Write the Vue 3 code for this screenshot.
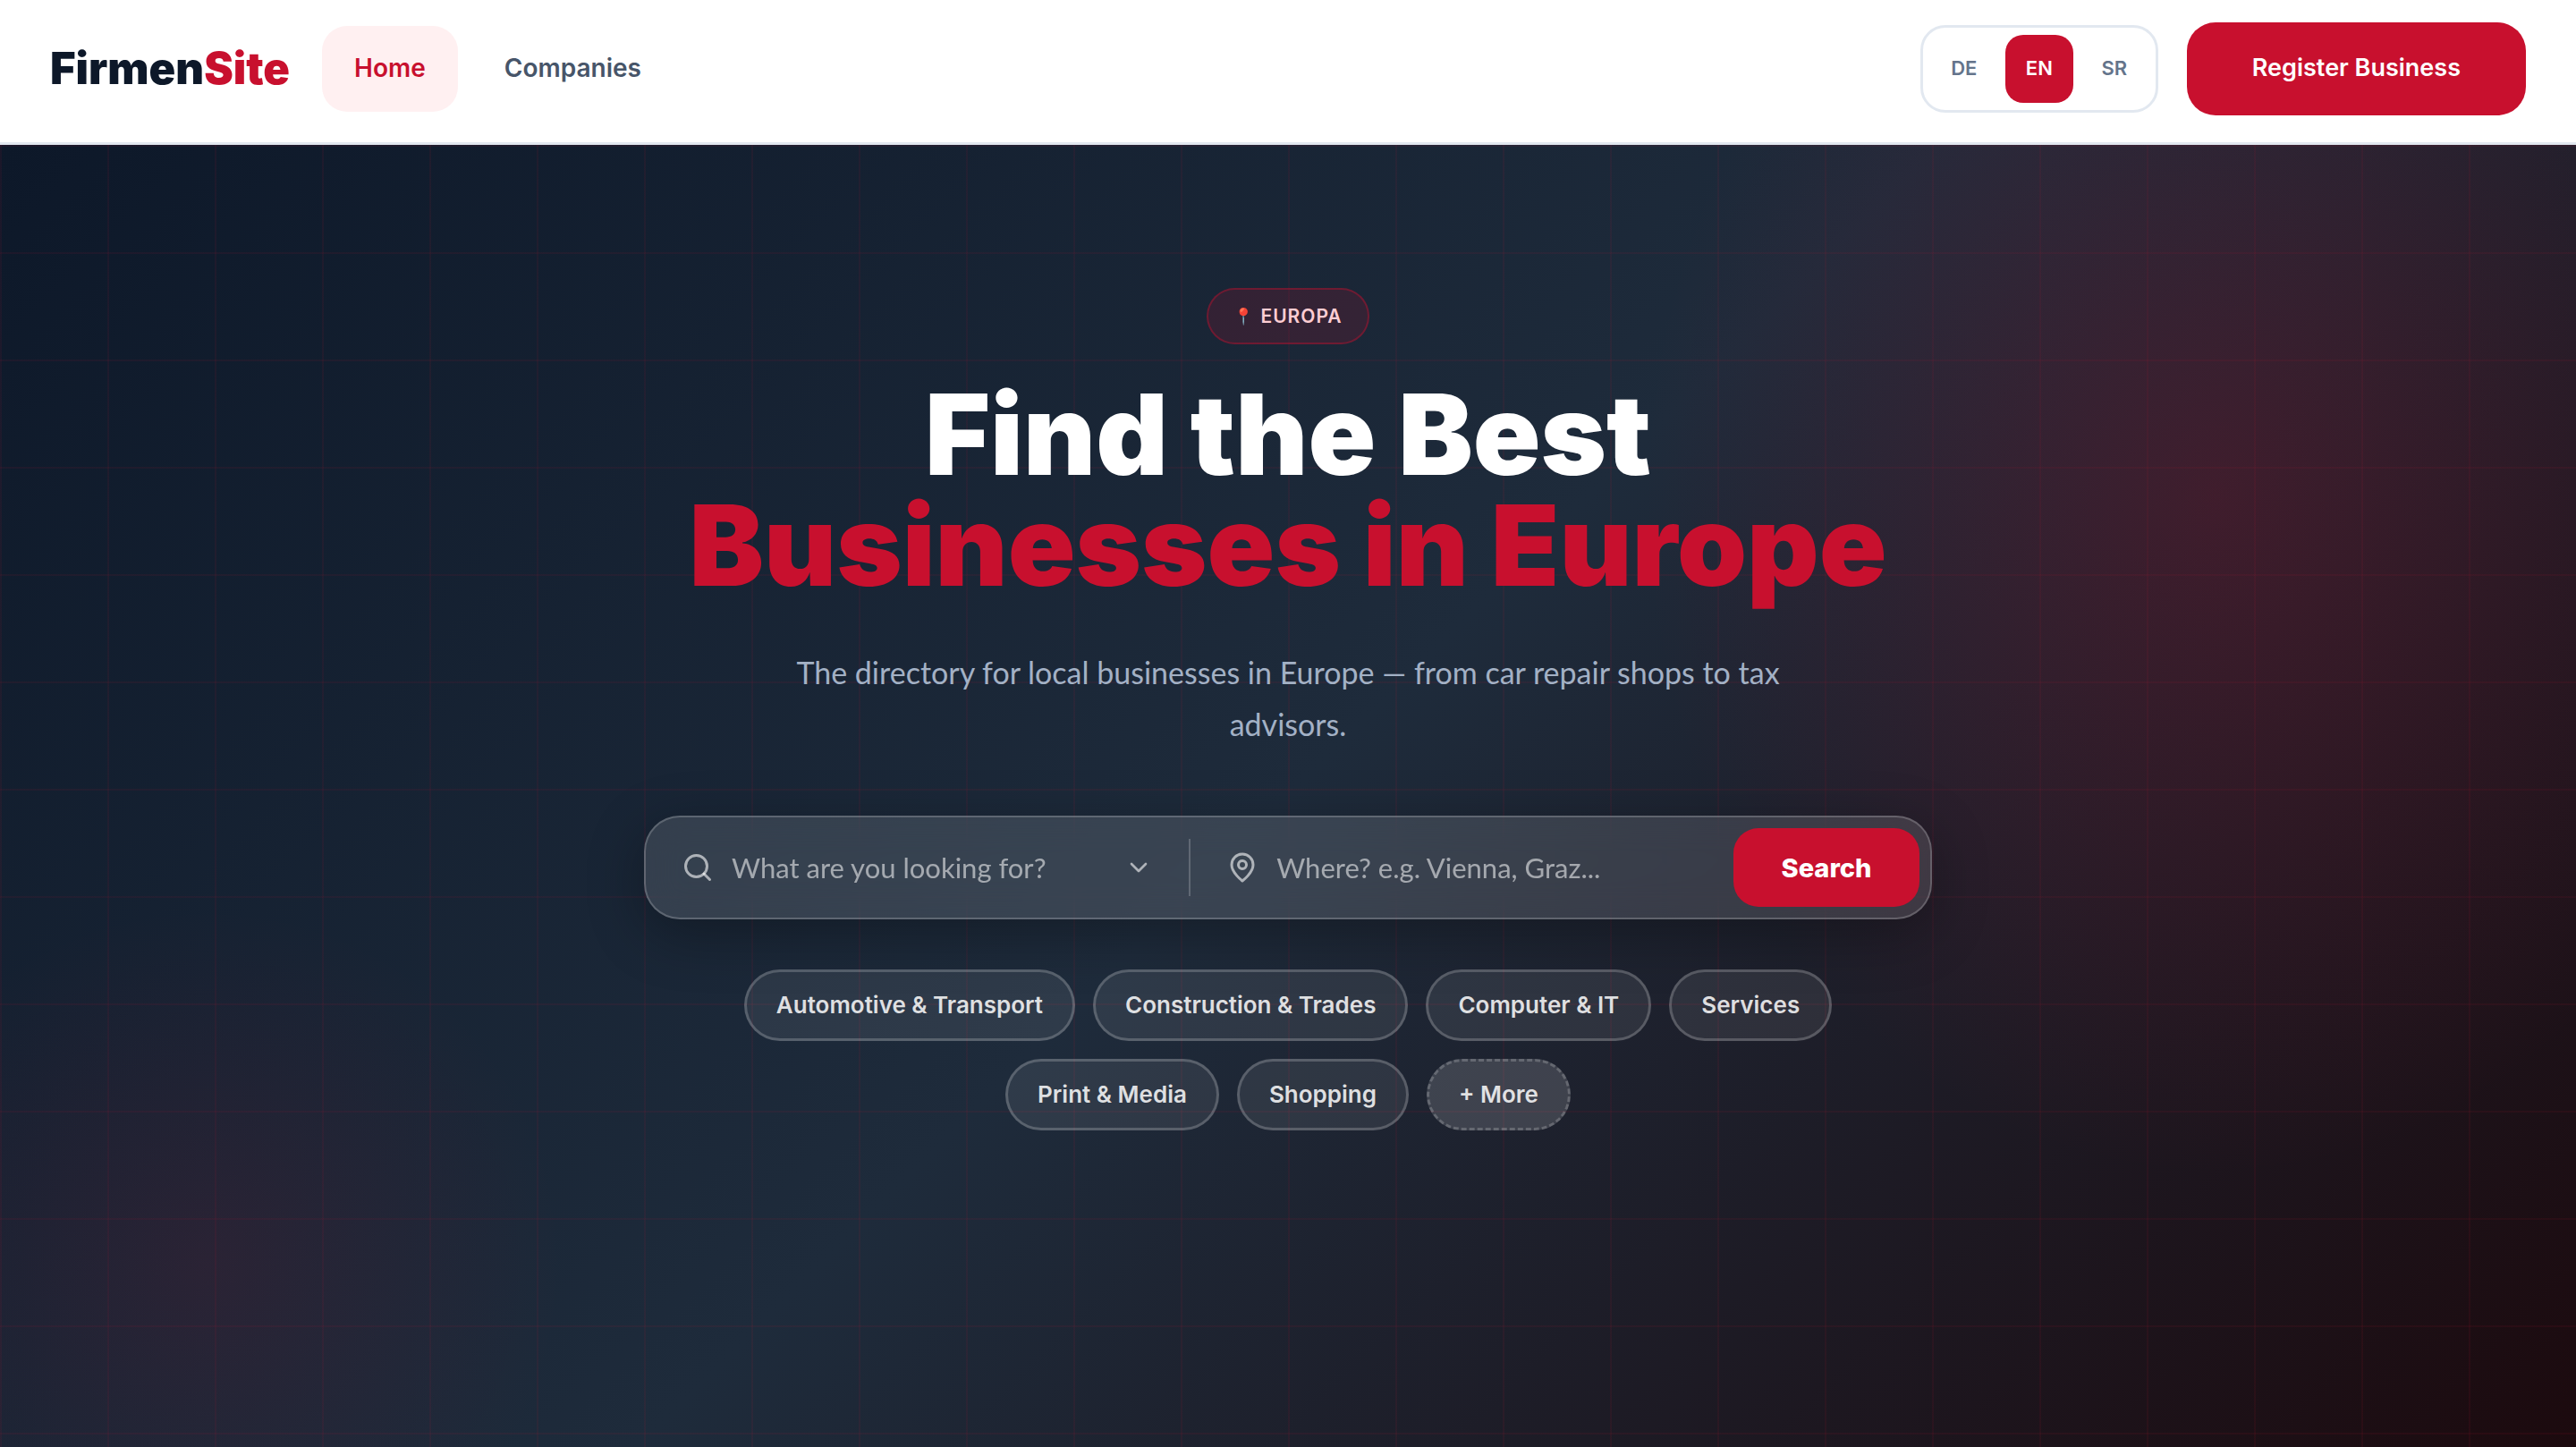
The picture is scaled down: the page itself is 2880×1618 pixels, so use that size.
<script setup>
import { ref } from 'vue'

const languages = ['DE', 'EN', 'SR']
const activeLanguage = ref('EN')

const categories = [
  'Automotive & Transport',
  'Construction & Trades',
  'Computer & IT',
  'Services',
  'Print & Media',
  'Shopping'
]
const category = ref('')
const place = ref('')
</script>

<template>
  <div class="page">
    <header class="topbar">
      <a class="logo" href="#">Firmen<span class="logo-accent">Site</span></a>
      <nav class="nav">
        <a class="nav-link active" href="#">Home</a>
        <a class="nav-link" href="#companies">Companies</a>
      </nav>
      <div class="languages">
        <button
          v-for="lang in languages"
          :key="lang"
          type="button"
          class="language"
          :class="{ active: lang === activeLanguage }"
          @click="activeLanguage = lang"
        >{{ lang }}</button>
      </div>
      <a class="register" href="#register">Register Business</a>
    </header>

    <main class="hero">
      <div class="badge"><span class="badge-icon">📍</span>EUROPA</div>
      <h1 class="title">
        Find the Best
        <span class="title-accent">Businesses in Europe</span>
      </h1>
      <p class="lead">
        The directory for local businesses in Europe — from car repair shops to tax advisors.
      </p>

      <form class="search" @submit.prevent>
        <div class="field field-what">
          <svg class="icon" viewBox="0 0 24 24" aria-hidden="true">
            <circle cx="11" cy="11" r="8" />
            <path d="m21 21-4.35-4.35" />
          </svg>
          <select v-model="category" class="control" aria-label="What are you looking for?">
            <option value="">What are you looking for?</option>
            <option v-for="name in categories" :key="name" :value="name">{{ name }}</option>
          </select>
          <svg class="icon chevron" viewBox="0 0 24 24" aria-hidden="true">
            <path d="m6 9 6 6 6-6" />
          </svg>
        </div>
        <span class="divider"></span>
        <div class="field field-where">
          <svg class="icon" viewBox="0 0 24 24" aria-hidden="true">
            <path d="M20 10c0 6-8 12-8 12s-8-6-8-12a8 8 0 0 1 16 0Z" />
            <circle cx="12" cy="10" r="3" />
          </svg>
          <input
            v-model="place"
            class="control"
            type="text"
            aria-label="Where?"
            placeholder="Where? e.g. Vienna, Graz..."
          />
        </div>
        <button class="submit" type="submit">Search</button>
      </form>

      <div class="chips">
        <a v-for="name in categories" :key="name" class="chip" href="#companies">{{ name }}</a>
        <button type="button" class="chip chip-more">+ More</button>
      </div>
    </main>
  </div>
</template>

<style>
body {
  margin: 0;
}
</style>

<style scoped>
.page {
  --red: #c8102e;
  display: flex;
  flex-direction: column;
  min-height: 100vh;
  font-family: Inter, "Liberation Sans", sans-serif;
}

.page *,
.page {
  box-sizing: border-box;
}

a {
  text-decoration: none;
}

button {
  border: 0;
  font-family: inherit;
  cursor: pointer;
}

/* Top bar */
.topbar {
  display: flex;
  align-items: center;
  padding: 25px 56px 30px;
  background: #fff;
  border-bottom: 3px solid #e2e8f0;
}

.logo {
  margin-right: 36px;
  font-size: 49px;
  font-weight: 900;
  line-height: 64px;
  color: #0d1829;
}

.logo-accent {
  color: var(--red);
}

.nav {
  display: flex;
  gap: 16px;
  margin-right: auto;
}

.nav-link {
  padding: 0 36px 2px;
  border-radius: 28px;
  font-size: 28px;
  font-weight: 600;
  line-height: 94px;
  color: #475569;
}

.nav-link.active {
  background: #fff0f1;
  color: var(--red);
}

.languages {
  display: flex;
  gap: 8px;
  margin-right: 32px;
  padding: 8px;
  border: 3px solid #e2e8f0;
  border-radius: 28px;
}

.language {
  width: 76px;
  height: 76px;
  padding: 0 0 2px;
  border-radius: 20px;
  background: transparent;
  font-size: 22px;
  font-weight: 600;
  color: #64748b;
}

.language.active {
  background: var(--red);
  color: #fff;
}

.register {
  padding: 0 73px 2px;
  border-radius: 32px;
  background: var(--red);
  font-size: 27px;
  font-weight: 600;
  line-height: 102px;
  color: #fff;
}

/* Hero */
.hero {
  display: flex;
  flex: 1;
  flex-direction: column;
  align-items: center;
  padding: 160px 56px;
  background:
    linear-gradient(rgba(200, 16, 46, 0.08) 2px, transparent 2px) 0 0 / 120px 120px,
    linear-gradient(90deg, rgba(200, 16, 46, 0.08) 2px, transparent 2px) 0 0 / 120px 120px,
    radial-gradient(ellipse 640px 760px at 86% 27%, rgba(200, 16, 46, 0.2), transparent),
    radial-gradient(circle 400px at 8% 86%, rgba(200, 16, 46, 0.1), transparent),
    linear-gradient(135deg, #0d1829 0%, #1e2b3b 50%, #1c0a0e 100%);
}

.badge {
  display: flex;
  align-items: center;
  gap: 8px;
  height: 63px;
  padding: 0 28px;
  border: 2px solid rgba(200, 16, 46, 0.4);
  border-radius: 32px;
  background: rgba(200, 16, 46, 0.15);
  font-size: 21px;
  font-weight: 600;
  letter-spacing: 1px;
  color: #fecdd3;
}

.badge-icon {
  font-size: 18px;
  letter-spacing: 0;
}

.title {
  margin: 39px 0 0;
  font-size: 125px;
  font-weight: 900;
  line-height: 124px;
  text-align: center;
  color: #fff;
}

.title-accent {
  display: block;
  color: var(--red);
}

.lead {
  max-width: 1160px;
  margin: 51px 0 0;
  font-family: Lato, sans-serif;
  font-size: 34px;
  line-height: 58px;
  text-align: center;
  color: #a3b1c5;
}

.search {
  display: flex;
  align-items: center;
  width: 100%;
  max-width: 1440px;
  margin-top: 73px;
  padding: 12px;
  border: 2px solid rgba(255, 255, 255, 0.2);
  border-radius: 40px;
  background: rgba(255, 255, 255, 0.12);
  box-shadow: 0 16px 64px rgba(0, 0, 0, 0.3);
  backdrop-filter: blur(20px);
}

.field {
  display: flex;
  align-items: center;
  gap: 20px;
  height: 88px;
}

.field-what {
  flex: 590;
  padding: 0 40px 0 28px;
}

.field-where {
  flex: 612;
  padding: 0 20px 0 40px;
}

.icon {
  flex: none;
  width: 36px;
  height: 36px;
  fill: none;
  stroke: rgba(255, 255, 255, 0.6);
  stroke-width: 2;
  stroke-linecap: round;
  stroke-linejoin: round;
}

.chevron {
  width: 32px;
  height: 32px;
}

.control {
  flex: 1;
  min-width: 0;
  height: 48px;
  padding: 0;
  border: 0;
  outline: 0;
  appearance: none;
  background: transparent;
  font-family: Lato, sans-serif;
  font-size: 31px;
  color: rgba(255, 255, 255, 0.55);
}

.control::placeholder {
  color: rgba(255, 255, 255, 0.55);
}

.control option {
  color: #0d1829;
}

.divider {
  width: 2px;
  height: 64px;
  background: rgba(255, 255, 255, 0.2);
}

.submit {
  width: 208px;
  height: 88px;
  border-radius: 28px;
  background: var(--red);
  font-size: 29px;
  font-weight: 800;
  color: #fff;
}

.chips {
  display: flex;
  flex-wrap: wrap;
  justify-content: center;
  gap: 20px;
  max-width: 1440px;
  margin-top: 56px;
}

.chip {
  height: 80px;
  padding: 0 33px;
  border: 3px solid rgba(255, 255, 255, 0.2);
  border-radius: 40px;
  background: rgba(255, 255, 255, 0.08);
  font-size: 26px;
  font-weight: 600;
  line-height: 74px;
  color: rgba(255, 255, 255, 0.85);
}

.chip-more {
  border: 3px dashed rgba(255, 255, 255, 0.2);
  background: rgba(255, 255, 255, 0.15);
}
</style>
